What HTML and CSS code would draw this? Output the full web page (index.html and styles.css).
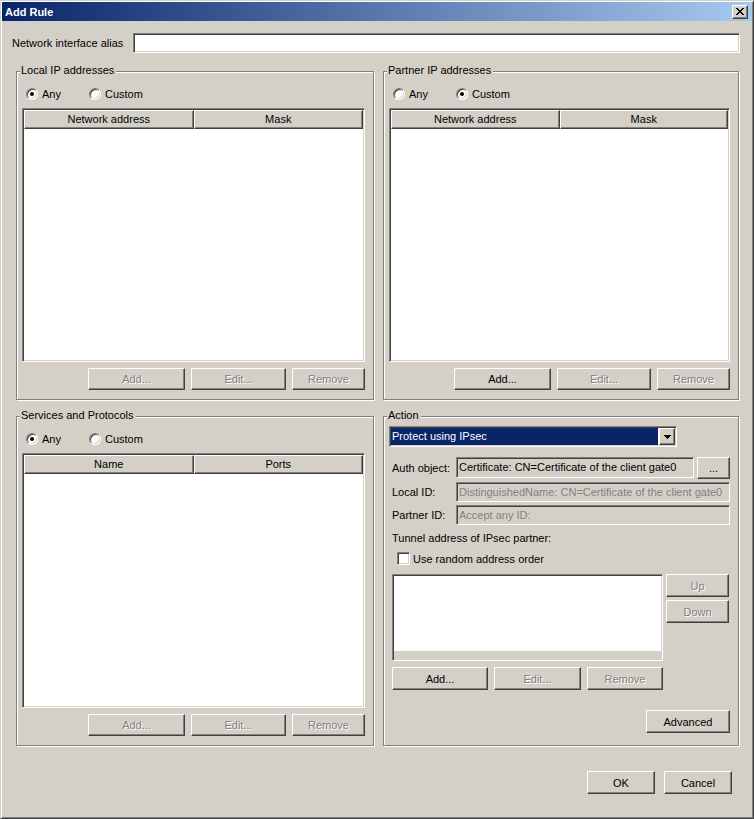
FILE: index.html
```html
<!DOCTYPE html>
<html lang="en">
<head>
  <meta charset="UTF-8">
  <title>Add Rule</title>
  <link rel="stylesheet" href="styles.css">
</head>
<body>
<div class="window">
  <div class="titlebar">
    <span class="title">Add Rule</span>
    <span class="close-btn">
      <svg width="8" height="7" viewBox="0 0 8 7"><path d="M0 0h2v1H0zM6 0h2v1H6zM1 1h2v1H1zM5 1h2v1H5zM2 2h4v1H2zM3 3h2v1H3zM2 4h4v1H2zM1 5h2v1H1zM5 5h2v1H5zM0 6h2v1H0zM6 6h2v1H6z" fill="#000"/></svg>
    </span>
  </div>

  <div class="content">
    <div class="alias-row">
      <label class="alias-label">Network interface alias</label>
      <div class="field alias-input"></div>
    </div>

    <div class="groups">
      <!-- Local IP addresses -->
      <div class="group">
        <span class="legend">Local IP addresses</span>
        <div class="radios">
          <span class="radio-item"><span class="radio checked"></span>Any</span>
          <span class="radio-item"><span class="radio"></span>Custom</span>
        </div>
        <div class="listview">
          <div class="lv-head"><span>Network address</span><span>Mask</span></div>
        </div>
        <div class="btn-row">
          <span class="btn disabled btn-add">Add...</span>
          <span class="btn disabled btn-edit">Edit...</span>
          <span class="btn disabled btn-remove">Remove</span>
        </div>
      </div>

      <!-- Partner IP addresses -->
      <div class="group">
        <span class="legend">Partner IP addresses</span>
        <div class="radios">
          <span class="radio-item"><span class="radio"></span>Any</span>
          <span class="radio-item"><span class="radio checked"></span>Custom</span>
        </div>
        <div class="listview">
          <div class="lv-head"><span>Network address</span><span>Mask</span></div>
        </div>
        <div class="btn-row">
          <span class="btn btn-add">Add...</span>
          <span class="btn disabled btn-edit narrow">Edit...</span>
          <span class="btn disabled btn-remove">Remove</span>
        </div>
      </div>

      <!-- Services and Protocols -->
      <div class="group">
        <span class="legend">Services and Protocols</span>
        <div class="radios">
          <span class="radio-item"><span class="radio checked"></span>Any</span>
          <span class="radio-item"><span class="radio"></span>Custom</span>
        </div>
        <div class="listview">
          <div class="lv-head"><span>Name</span><span>Ports</span></div>
        </div>
        <div class="btn-row">
          <span class="btn disabled btn-add">Add...</span>
          <span class="btn disabled btn-edit">Edit...</span>
          <span class="btn disabled btn-remove">Remove</span>
        </div>
      </div>

      <!-- Action -->
      <div class="group action">
        <span class="legend">Action</span>
        <div class="combo">
          <span class="combo-value">Protect using IPsec</span>
          <span class="btn combo-arrow">
            <svg width="7" height="4" viewBox="0 0 7 4"><path d="M0 0h7v1H0zM1 1h5v1H1zM2 2h3v1H2zM3 3h1v1H3z" fill="#000"/></svg>
          </span>
        </div>

        <div class="auth-grid">
          <span class="auth-label">Auth object:</span>
          <div class="field readonly auth-field">Certificate: CN=Certificate of the client gate0</div>
          <span class="btn dots-btn">...</span>

          <span class="auth-label">Local ID:</span>
          <div class="field readonly disabled wide">DistinguishedName: CN=Certificate of the client gate0</div>

          <span class="auth-label">Partner ID:</span>
          <div class="field readonly disabled wide">Accept any ID:</div>
        </div>

        <div class="tunnel-label">Tunnel address of IPsec partner:</div>
        <div class="check-row"><span class="checkbox"></span>Use random address order</div>

        <div class="tunnel-box">
          <div class="listbox"><div class="hscroll"></div></div>
          <div class="updown">
            <span class="btn disabled updown-btn">Up</span>
            <span class="btn disabled updown-btn">Down</span>
          </div>
        </div>

        <div class="tunnel-buttons">
          <span class="btn t-add">Add...</span>
          <span class="btn disabled t-edit">Edit...</span>
          <span class="btn disabled t-remove">Remove</span>
        </div>

        <span class="btn advanced">Advanced</span>
      </div>
    </div>

    <div class="footer">
      <span class="btn footer-btn">OK</span>
      <span class="btn footer-btn">Cancel</span>
    </div>
  </div>
</div>
</body>
</html>
```

FILE: styles.css
```css
* {
  box-sizing: border-box;
}

body {
  margin: 0;
  font-family: "Liberation Sans", Arial, sans-serif;
  font-size: 11px;
  color: #000;
  background-color: #d4d0c8;
}

.window {
  width: 754px;
  height: 819px;
  background-color: #d4d0c8;
  border: 1px solid;
  border-color: #d4d0c8 #404040 #404040 #d4d0c8;
  box-shadow: inset 1px 1px #fff, inset -1px -1px #808080;
  padding: 1px;
  display: flex;
  flex-direction: column;
}

.titlebar {
  height: 19px;
  background: linear-gradient(to right, #0a246a, #a6caf0);
  display: flex;
  align-items: center;
  justify-content: space-between;
  padding: 0 4px 0 3px;
}

.title {
  color: #fff;
  font-weight: bold;
}

.close-btn {
  width: 16px;
  height: 14px;
  display: flex;
  align-items: center;
  justify-content: center;
  background-color: #d4d0c8;
  border: 1px solid;
  border-color: #fff #404040 #404040 #fff;
  box-shadow: inset -1px -1px #808080;
}

.content {
  flex: 1;
  padding: 0 12px 0 10px;
  display: flex;
  flex-direction: column;
}

/* sunken edit fields */
.field {
  border: 1px solid;
  border-color: #808080 #fff #fff #808080;
  box-shadow: inset 1px 1px #404040, inset -1px -1px #d4d0c8;
  background-color: #fff;
  height: 20px;
  padding: 0 3px;
  line-height: 18px;
  white-space: nowrap;
  overflow: hidden;
}

.field.readonly {
  background-color: #d4d0c8;
}

.field.disabled {
  color: #808080;
}

.alias-row {
  display: flex;
  align-items: center;
  margin-top: 12px;
}

.alias-label {
  width: 121px;
}

.alias-input {
  flex: 1;
}

.groups {
  display: grid;
  grid-template-columns: 358px 356px;
  grid-template-rows: 329px 330px;
  column-gap: 9px;
  row-gap: 16px;
  margin: 18px 0 0 4px;
}

.group {
  position: relative;
  border: 1px solid #808080;
  box-shadow: inset 1px 1px #fff, 1px 1px #fff;
  display: flex;
  flex-direction: column;
  padding: 15px 8px 9px 5px;
}

.legend {
  position: absolute;
  top: -8px;
  left: 3px;
  padding: 0 2px 0 1px;
  line-height: 13px;
  background-color: #d4d0c8;
}

.radios {
  display: flex;
  align-items: center;
  height: 14px;
  padding-left: 4px;
}

.radio-item {
  display: flex;
  align-items: center;
  gap: 4px;
  width: 63px;
}

.radio {
  position: relative;
  width: 12px;
  height: 12px;
  border-radius: 50%;
  background-color: #fff;
  border: 1px solid;
  border-color: #808080 #fff #fff #808080;
  box-shadow: inset 1px 1px #404040, inset -1px -1px #d4d0c8;
}

.radio.checked::after {
  content: "";
  position: absolute;
  left: 3px;
  top: 3px;
  width: 4px;
  height: 4px;
  border-radius: 50%;
  background-color: #000;
}

.listview {
  flex: 1;
  margin-top: 7px;
  padding: 1px;
  background-color: #fff;
  border: 1px solid;
  border-color: #808080 #fff #fff #808080;
  box-shadow: inset 1px 1px #404040, inset -1px -1px #d4d0c8;
}

.lv-head {
  display: flex;
  height: 19px;
}

.lv-head span {
  flex: 1;
  text-align: center;
  line-height: 17px;
  background-color: #d4d0c8;
  border: 1px solid;
  border-color: #fff #404040 #404040 #fff;
  box-shadow: inset -1px -1px #808080;
}

/* raised buttons */
.btn {
  display: flex;
  align-items: center;
  justify-content: center;
  height: 22px;
  background-color: #d4d0c8;
  border: 1px solid;
  border-color: #fff #404040 #404040 #fff;
  box-shadow: inset -1px -1px #808080;
  white-space: nowrap;
}

.btn.disabled {
  color: #808080;
  text-shadow: 1px 1px #fff;
}

.btn-row {
  display: flex;
  justify-content: flex-end;
  gap: 6px;
  margin-top: 6px;
}

.btn-add {
  width: 97px;
}

.btn-edit {
  width: 95px;
}

.btn-edit.narrow {
  width: 94px;
}

.btn-remove {
  width: 73px;
}

/* Action group */
.group.action {
  padding: 9px 8px 0 5px;
}

.combo {
  display: flex;
  width: 288px;
  height: 21px;
  padding: 1px;
  background-color: #fff;
  border: 1px solid;
  border-color: #808080 #fff #fff #808080;
  box-shadow: inset 1px 1px #404040, inset -1px -1px #d4d0c8;
}

.combo-value {
  flex: 1;
  margin-right: 1px;
  padding-left: 1px;
  background-color: #0a246a;
  color: #fff;
  line-height: 16px;
}

.combo-arrow {
  width: 16px;
  height: 17px;
}

.auth-grid {
  display: grid;
  grid-template-columns: 61px 238px 33px;
  grid-template-rows: 22px 20px 20px;
  column-gap: 3px;
  row-gap: 3px;
  margin: 10px 0 0 3px;
}

.auth-label {
  align-self: center;
}

.auth-field {
  height: 21px;
  line-height: 19px;
  padding: 0 2px;
}

.field.wide {
  grid-column: 2 / 4;
  padding: 0 2px;
}

.dots-btn {
  height: 22px;
}

.tunnel-label {
  margin: 6px 0 0 3px;
  line-height: 14px;
}

.check-row {
  display: flex;
  align-items: center;
  gap: 3px;
  height: 13px;
  margin: 7px 0 0 8px;
}

.checkbox {
  width: 13px;
  height: 13px;
  background-color: #fff;
  border: 1px solid;
  border-color: #808080 #fff #fff #808080;
  box-shadow: inset 1px 1px #404040, inset -1px -1px #d4d0c8;
}

.tunnel-box {
  display: flex;
  gap: 3px;
  margin: 9px 0 0 3px;
}

.listbox {
  width: 271px;
  height: 87px;
  display: flex;
  flex-direction: column;
  justify-content: flex-end;
  background-color: #fff;
  border: 1px solid;
  border-color: #808080 #fff #fff #808080;
  box-shadow: inset 1px 1px #404040, inset -1px -1px #d4d0c8;
}

.hscroll {
  height: 9px;
  margin: 0 1px 0 1px;
  background-color: #d4d0c8;
}

.updown {
  display: flex;
  flex-direction: column;
  gap: 3px;
}

.updown-btn {
  width: 63px;
  height: 23px;
}

.tunnel-buttons {
  display: flex;
  gap: 6px;
  margin: 6px 0 0 3px;
}

.tunnel-buttons .btn {
  height: 23px;
}

.t-add {
  width: 96px;
}

.t-edit {
  width: 87px;
}

.t-remove {
  width: 76px;
}

.advanced {
  align-self: flex-end;
  width: 84px;
  height: 23px;
  margin-top: 20px;
}

.footer {
  display: flex;
  justify-content: flex-end;
  gap: 9px;
  margin-top: 25px;
  padding-right: 8px;
}

.footer-btn {
  width: 68px;
  height: 23px;
}
```
